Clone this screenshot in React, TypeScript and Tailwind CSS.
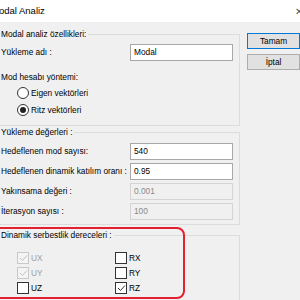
import React from "react";

const font = { fontFamily: '"Liberation Sans", Arial, sans-serif' };

function Check({ checked, disabled }: { checked?: boolean; disabled?: boolean }) {
  return (
    <span
      className={`flex h-[12px] w-[12px] items-center justify-center border ${
        disabled ? "border-[#c8c8c8] bg-[#f4f4f4]" : "border-[#333333] bg-white"
      }`}
    >
      {checked && (
        <svg width="9" height="8" viewBox="0 0 9 8">
          <path
            d="M1 4 L3.5 6.5 L8 1.5"
            fill="none"
            stroke={disabled ? "#c0c0c0" : "#333333"}
            strokeWidth="1"
          />
        </svg>
      )}
    </span>
  );
}

function CheckRow({ label, checked, disabled }: { label: string; checked?: boolean; disabled?: boolean }) {
  return (
    <div className="flex h-[12px] items-center gap-[2px]">
      <Check checked={checked} disabled={disabled} />
      <span className={disabled ? "text-[#a0a0a0]" : "text-black"}>{label}</span>
    </div>
  );
}

function Radio({ label, selected }: { label: string; selected?: boolean }) {
  return (
    <div className="flex h-[14px] items-center gap-[2px] pl-[23px]">
      <span className="flex h-[12px] w-[12px] items-center justify-center rounded-full border border-[#333333] bg-white">
        {selected && <span className="h-[6px] w-[6px] rounded-full bg-[#222222]" />}
      </span>
      <span>{label}</span>
    </div>
  );
}

function Field({ label, value, disabled }: { label: string; value: string; disabled?: boolean }) {
  return (
    <div className="flex h-[17px] items-center">
      <span className="w-[136px] shrink-0 pl-[7px]">{label}</span>
      <div
        className={`flex h-[17px] w-[103px] items-center border px-[3px] ${
          disabled ? "border-[#d4d4d4] bg-[#f0f0f0] text-[#8a8a8a]" : "border-[#a8a8a8] bg-white text-black"
        }`}
      >
        {value}
      </div>
    </div>
  );
}

function Group({ title, className, children }: { title: string; className: string; children: React.ReactNode }) {
  return (
    <div className={`relative border border-[#dcdcdc] ${className}`}>
      <span className="absolute left-[6px] top-[-7px] bg-[#f0f0f0] pl-[1px] pr-[2px] leading-[12px]">{title}</span>
      {children}
    </div>
  );
}

export default function App() {
  return (
    <div className="relative h-[300px] w-[300px] overflow-hidden bg-[#f0f0f0] text-[8.3px] text-black" style={font}>
      <div className="flex h-[22px] items-center justify-between bg-white">
        <span className="ml-[-9px] text-[9.5px]">Modal Analiz</span>
        <span className="mr-[-3px] text-[10px] text-[#555555]">✕</span>
      </div>

      <div className="flex gap-[7px] pt-[12px]">
        <div className="ml-[-7px] flex w-[251px] flex-col gap-[6px]">
          <Group title="Modal analiz özellikleri:" className="h-[92px] pt-[9px]">
            <Field label="Yükleme adı :" value="Modal" />
            <div className="mt-[9px] flex h-[14px] items-center pl-[7px]">Mod hesabı yöntemi:</div>
            <div className="mt-[2px] flex flex-col gap-[3px]">
              <Radio label="Eigen vektörleri" />
              <Radio label="Ritz vektörleri" selected />
            </div>
          </Group>

          <Group title="Yükleme değerleri :" className="h-[93px] pt-[10px]">
            <div className="flex flex-col gap-[3px]">
              <Field label="Hedeflenen mod sayısı:" value="540" />
              <Field label="Hedeflenen dinamik katılım oranı :" value="0.95" />
              <Field label="Yakınsama değeri :" value="0.001" disabled />
              <Field label="İterasyon sayısı :" value="100" disabled />
            </div>
          </Group>

          <Group title="Dinamik serbestlik dereceleri :" className="mt-[4px] h-[80px] pt-[16px]">
            <div className="flex">
              <div className="flex w-[121px] flex-col gap-[3px] pl-[23px]">
                <CheckRow label="UX" checked disabled />
                <CheckRow label="UY" checked disabled />
                <CheckRow label="UZ" />
              </div>
              <div className="flex flex-col gap-[3px]">
                <CheckRow label="RX" />
                <CheckRow label="RY" />
                <CheckRow label="RZ" checked />
              </div>
            </div>
          </Group>
        </div>

        <div className="flex flex-col gap-[5px] pt-[-1px]">
          <button className="mt-[-1px] h-[16px] w-[53px] border border-[#0078d7] bg-[#e1e1e1] text-[8.3px]">Tamam</button>
          <button className="h-[16px] w-[53px] border border-[#adadad] bg-[#e1e1e1] text-[8.3px]">İptal</button>
        </div>
      </div>

      <div className="pointer-events-none absolute left-[-12px] top-[227px] h-[72px] w-[197px] rounded-[8px] border-2 border-[#e3202e]" />
    </div>
  );
}
